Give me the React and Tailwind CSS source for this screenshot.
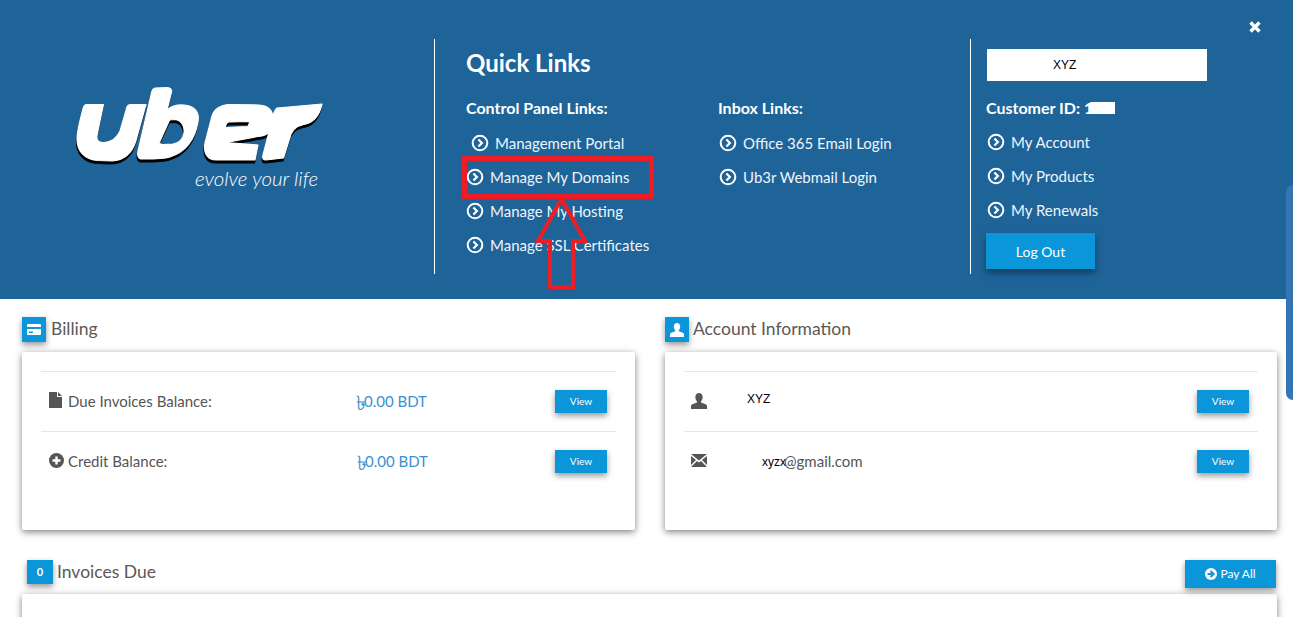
const ChevC = () => (
  <svg width="18" height="18" viewBox="0 0 18 18" className="shrink-0">
    <circle cx="9" cy="9" r="7.300" fill="none" stroke="#fff" strokeWidth="2" />
    <path d="M7.400 5.500 10.900 9l-3.500 3.500" fill="none" stroke="#fff" strokeWidth="2.200" />
  </svg>
);

const LinkRow = ({ label, pad = "" }) => (
  <div className={`flex items-center h-[34px] gap-[6px] text-[15px] text-[#eef5fb] ${pad}`}>
    <ChevC />
    <span>{label}</span>
  </div>
);

const ViewBtn = () => (
  <div className="w-[52px] h-[23px] bg-[#0a96d8] text-white text-[10px] flex items-center justify-center shadow-[0_3px_6px_rgba(0,0,0,0.4)]">
    View
  </div>
);

const Badge = ({ children, w = "w-[24px]", h = "h-[25px]" }) => (
  <div className={`${w} ${h} bg-[#0a96d8] flex items-center justify-center shrink-0 text-white text-[11px] font-bold shadow-[0_3px_6px_rgba(0,0,0,0.4)]`}>
    {children}
  </div>
);

const Row = ({ icon, label, value }) => (
  <div className="h-[60px] flex items-center relative border-t border-[#e6e6e6]">
    {icon}
    {label}
    {value}
    <div className="ml-auto mr-[9px]">
      <ViewBtn />
    </div>
  </div>
);

const Amount = () => (
  <span className="text-[15px] text-[#3a90d2] flex items-center">
    <span className="text-[20px] leading-[20px] w-[8px]">৳</span>0.00 BDT
  </span>
);

const Logo = () => {
  const u =
    "M86 104.500 L103.500 104.500 L97.500 133 C95.500 141 99 143 104 142.500 C112 142 117 138 120 131 L127 107 C127.500 105 129 104.500 131 104.500 L146 104.500 L135.500 142 C132 153 124 160 112 161 L97 160.500 C84 159 77 151 77 139 C77 131 80 120 83 109 C83.500 106 84.500 105 86 104.500 Z";
  const b =
    "M155 88 L167 87.500 C171 87.500 172 90 171.500 92 L167 110 C171 106.500 177 104.500 184 105 C194 105.500 200 112 198 122 C195 139 186 152 170 157 C163 159 156 159 145 159 L142 159 C138 159 137 155 138 151 L151.500 93 C152 90 153 88.500 155 88 Z M169.500 120 L160.500 140 C158.500 143.500 160 144.500 163 144.500 L173 144 C179 143 183 139 184 133 C185 126 181 120 175 119.500 C173 119.500 171 119.500 169.500 120 Z";
  const e =
    "M228 104.500 L259 105 C270 105.500 275 113 272 122 L269 131 C267.500 135 264 136 258 136.500 L226 142.500 L258 145 L255 160 L216 160 C207 160 203 152 205 143 L212 116 C214 109 221 105 228 104.500 Z M228.500 122 L250 121.500 L248 126.500 L225.500 127.500 C225.500 125 226.500 123 228.500 122 Z";
  const r =
    "M277 108 L322 104 C320 113 316 121 306 124 C298 126 294 127 291 134 L283.500 158 L266 160 C263 160 262 158 263 155 L274 113 C275 110 276 109 277 108 Z";
  const shapes = [u, b, e, r];
  return (
    <svg width="280" height="120" viewBox="60 80 280 120" className="absolute left-[60px] top-[80px]">
      {shapes.map((d, i) => (
        <path key={`s${i}`} d={d} fill="#000" stroke="#000" strokeWidth="1.200" fillRule="evenodd" transform="translate(-0.500 3)" />
      ))}
      {shapes.map((d, i) => (
        <path key={`w${i}`} d={d} fill="#fff" stroke="#fff" strokeWidth="1.200" strokeLinejoin="round" fillRule="evenodd" />
      ))}
    </svg>
  );
};

const Card = ({ children, className = "" }) => (
  <div className={`bg-white rounded-[2px] shadow-[0_2px_7px_rgba(0,0,0,0.5)] ${className}`}>{children}</div>
);

export default function App() {
  return (
    <div className="relative w-full h-[617px] overflow-hidden bg-white font-['Lato',sans-serif]">
      <header className="relative h-[299px] bg-[#1f6499] flex pt-[39px] text-white">
        <div className="w-[434px] shrink-0">
          <Logo />
          <div className="absolute left-[195px] top-[165px] text-[20.500px] italic font-light leading-[26px]">
            evolve your life
          </div>
        </div>

        <div className="w-[536px] h-[235px] shrink-0 border-l border-white pl-[31px] flex flex-col">
          <div className="text-[24px] font-bold leading-[28px] mt-[10px]">Quick Links</div>
          <div className="flex mt-[21px]">
            <div className="w-[252px]">
              <div className="text-[16px] font-bold leading-[20px] mb-[8px]">Control Panel Links:</div>
              <LinkRow label="Management Portal" pad="pl-[5px]" />
              <LinkRow label="Manage My Domains" />
              <LinkRow label="Manage My Hosting" />
              <LinkRow label="Manage SSL Certificates" />
            </div>
            <div>
              <div className="text-[16px] font-bold leading-[20px] mb-[8px]">Inbox Links:</div>
              <LinkRow label="Office 365 Email Login" pad="pl-[1px]" />
              <LinkRow label="Ub3r Webmail Login" pad="pl-[1px]" />
            </div>
          </div>
        </div>

        <div className="h-[235px] border-l border-white pl-[15px] flex flex-col">
          <div className="w-[220px] h-[32px] ml-[1px] mt-[10px] bg-white text-black text-[12px] font-['Liberation_Sans',sans-serif] flex items-center pl-[66px]">
            XYZ
          </div>
          <div className="flex items-center h-[20px] mt-[17px] mb-[7px] text-[16px] font-bold">
            Customer ID: 1<span className="w-[25px] h-[12px] bg-white -ml-[3px]"></span>
          </div>
          <LinkRow label="My Account" pad="pl-[1px]" />
          <LinkRow label="My Products" pad="pl-[1px]" />
          <LinkRow label="My Renewals" pad="pl-[1px]" />
          <div className="w-[109px] h-[36px] mt-[6px] bg-[#0a96d8] text-[14px] flex items-center justify-center shadow-[0_4px_7px_rgba(0,0,0,0.4)]">
            Log Out
          </div>
        </div>

        <svg width="14" height="14" viewBox="0 0 14 14" className="absolute left-[1248px] top-[20px]">
          <path d="M2.500 2.500 11.500 11.500M11.500 2.500 2.500 11.500" stroke="#fff" strokeWidth="3.400" />
        </svg>
      </header>

      <div className="absolute right-0 top-[185px] w-[7px] h-[215px] bg-[#3375b5] rounded-tl-[8px] rounded-bl-[8px]"></div>

      <main className="pl-[22px] pr-[16px]">
        <div className="flex gap-[30px] pt-[18px]">
          <section className="w-[613px]">
            <div className="flex items-center gap-[5px] h-[25px]">
              <Badge>
                <svg width="14" height="11" viewBox="0 0 14 11">
                  <path fillRule="evenodd" d="M1 0h12a1 1 0 0 1 1 1v9a1 1 0 0 1-1 1H1a1 1 0 0 1-1-1V1a1 1 0 0 1 1-1Zm-1 3v2h14V3ZM2 7.500v1.500h4V7.500Z" fill="#fff" />
                </svg>
              </Badge>
              <h2 className="text-[17.500px] text-[#5b5856]">Billing</h2>
            </div>
            <Card className="mt-[10px] h-[178px] px-[19px] pt-[19px]">
              <Row
                icon={
                  <svg width="13" height="16" viewBox="0 0 13 16" className="ml-[8px] -mt-[4px]">
                    <path d="M0 0h8v5h5v11H0Zm9 0 4 4H9Z" fill="#555" />
                  </svg>
                }
                label={<span className="ml-[6px] text-[15px] text-[#555] w-[288px]">Due Invoices Balance:</span>}
                value={<Amount />}
              />
              <Row
                icon={
                  <svg width="15" height="15" viewBox="0 0 15 15" className="ml-[8px] -mt-[2px]">
                    <circle cx="7.500" cy="7.500" r="7.500" fill="#555" />
                    <path d="M7.500 3.500v8M3.500 7.500h8" stroke="#fff" strokeWidth="2.400" />
                  </svg>
                }
                label={<span className="ml-[4px] text-[15px] text-[#555] w-[289px]">Credit Balance:</span>}
                value={<Amount />}
              />
            </Card>
          </section>

          <section className="w-[612px]">
            <div className="flex items-center gap-[4px] h-[25px]">
              <Badge>
                <svg width="14" height="14" viewBox="0 0 14 14">
                  <path d="M7 0c2 0 3.200 1.600 3.200 3.800 0 1.400-.6 2.700-1.400 3.500v1l4 1.500c.8.4 1.200 1 1.200 1.900V14H0v-2.300c0-.9.400-1.500 1.200-1.900l4-1.500v-1C4.400 6.500 3.800 5.200 3.800 3.800 3.800 1.600 5 0 7 0Z" fill="#fff" />
                </svg>
              </Badge>
              <h2 className="text-[17.500px] text-[#5b5856]">Account Information</h2>
            </div>
            <Card className="mt-[10px] h-[178px] px-[19px] pt-[19px]">
              <Row
                icon={
                  <svg width="16" height="16" viewBox="0 0 14 14" className="ml-[7px] -mt-[1px]">
                    <path d="M7 0c2 0 3.200 1.600 3.200 3.800 0 1.400-.6 2.700-1.400 3.500v1l4 1.500c.8.4 1.200 1 1.200 1.900V14H0v-2.300c0-.9.400-1.500 1.200-1.900l4-1.500v-1C4.400 6.500 3.800 5.200 3.800 3.800 3.800 1.600 5 0 7 0Z" fill="#555" />
                  </svg>
                }
                label={<span className="ml-[40px] -mt-[6px] text-[12px] text-black font-['Liberation_Sans',sans-serif]">XYZ</span>}
              />
              <Row
                icon={
                  <svg width="16" height="13" viewBox="0 0 16 13" className="ml-[7px] -mt-[2px]">
                    <path d="M0 0h16L8 6.500ZM0 2l5 4-5 5ZM16 2l-5 4 5 5ZM6 7l2 1.600L10 7l6 6H0Z" fill="#555" />
                  </svg>
                }
                label={
                  <span className="ml-[55px] text-[15px] text-[#555] flex items-center">
                    <span className="text-[12px] text-black font-['Liberation_Sans',sans-serif] w-[22px]">xyzx</span>
                    @gmail.com
                  </span>
                }
              />
            </Card>
          </section>
        </div>

        <section className="mt-[30px]">
          <div className="flex items-start justify-between">
            <div className="flex items-center gap-[4px] ml-[5px] h-[24px]">
              <Badge w="w-[26px]" h="h-[24px]">0</Badge>
              <h2 className="text-[17.500px] text-[#5b5856]">Invoices Due</h2>
            </div>
            <div className="w-[91px] h-[28px] mr-[1px] bg-[#0a96d8] text-white text-[12px] flex items-center justify-center gap-[3px] shadow-[0_3px_6px_rgba(0,0,0,0.4)]">
              <svg width="12" height="12" viewBox="0 0 12 12">
                <circle cx="6" cy="6" r="6" fill="#fff" />
                <path d="M2.500 6h4.500M5.500 3l3.300 3-3.300 3" fill="none" stroke="#0a96d8" strokeWidth="1.800" />
              </svg>
              Pay All
            </div>
          </div>
          <Card className="mt-[6px] h-[80px]"></Card>
        </section>
      </main>

      <div className="absolute left-[462px] top-[156px] w-[192px] h-[43px] border-[5px] border-[#ee1c25]"></div>
      <svg width="60" height="100" viewBox="0 0 60 100" className="absolute left-[531px] top-[194px]">
        <path d="M30.500 5 54 47H42V93H19V47H7Z" fill="none" stroke="#ee1c25" strokeWidth="4" strokeLinejoin="miter" />
      </svg>
    </div>
  );
}
